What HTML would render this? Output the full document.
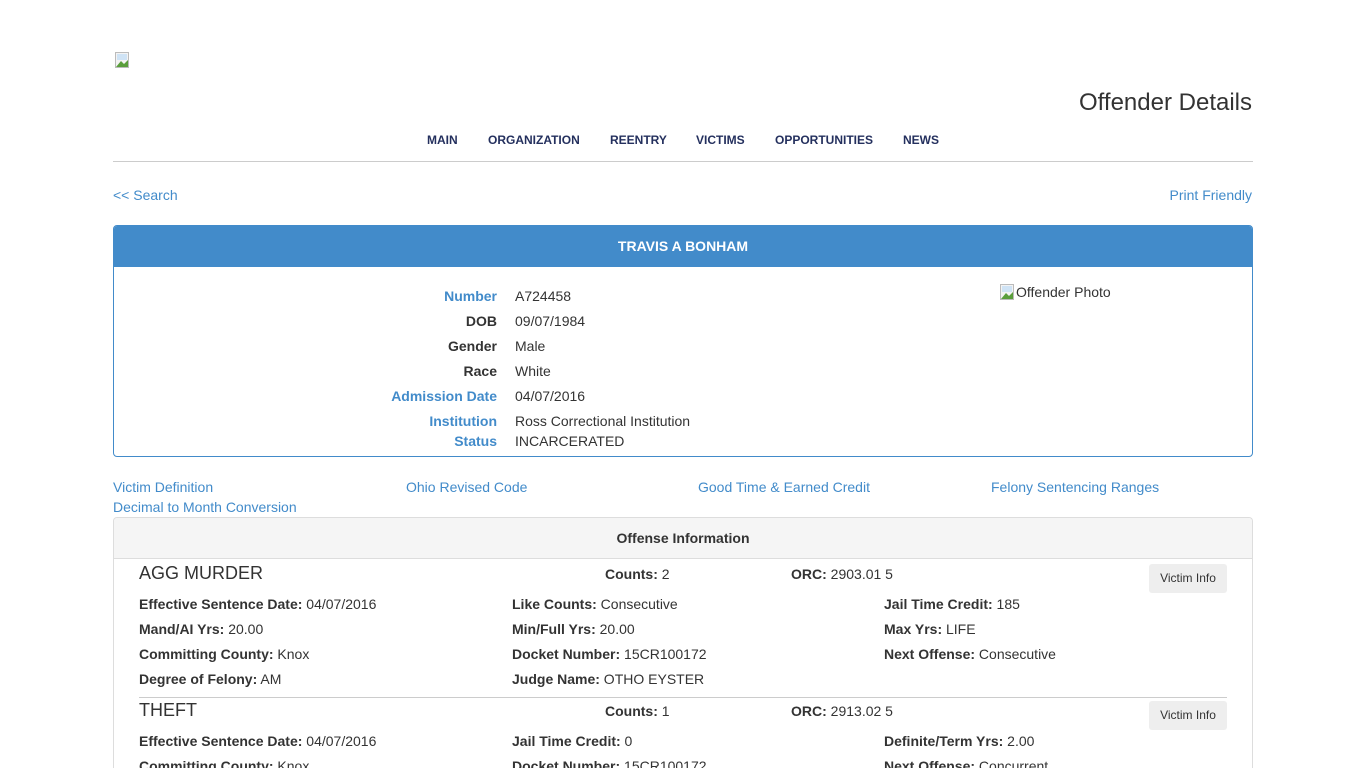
<!DOCTYPE html>
<html style="width:1366px;height:768px;overflow:hidden"><head><meta charset="utf-8"><style>
*{margin:0;padding:0;box-sizing:border-box}
body{width:1366px;height:768px;overflow:hidden;background:#fff;font-family:"Liberation Sans",Arial,sans-serif;font-size:14px;color:#333;position:relative}
.a{position:absolute;white-space:nowrap;line-height:20px}
.l{color:#428bca}
.nav{font-size:12px;font-weight:bold;color:#24305e}
b{font-weight:bold;color:#333}
.btn{position:absolute;width:78px;height:29px;background:#eeeeee;border-radius:3px;font-size:12px;line-height:29px;text-align:center;color:#333}
.hr{position:absolute;height:1px;background:#ccc}
</style></head><body>
<svg style="position:absolute;left:115px;top:52px" width="16" height="16"><rect x="0.5" y="0.5" width="13" height="15" fill="#f3f3f3" stroke="#bbb"/><path d="M1 15 L6 9 L9 12 L13 8 L13 15Z" fill="#5a9e3c"/><rect x="2" y="2" width="10" height="6" fill="#cfe3f5"/></svg>
<div class="a" style="right:114px;top:89px;font-size:24px;line-height:28px;color:#333">Offender Details</div>
<div class="a nav" style="left:427px;top:130px">MAIN</div>
<div class="a nav" style="left:488px;top:130px">ORGANIZATION</div>
<div class="a nav" style="left:610px;top:130px">REENTRY</div>
<div class="a nav" style="left:696px;top:130px">VICTIMS</div>
<div class="a nav" style="left:775px;top:130px">OPPORTUNITIES</div>
<div class="a nav" style="left:903px;top:130px">NEWS</div>
<div class="hr" style="left:113px;top:161px;width:1140px"></div>
<div class="a l" style="left:113px;top:185px">&lt;&lt; Search</div>
<div class="a l" style="right:114px;top:185px">Print Friendly</div>
<div style="position:absolute;left:113px;top:225px;width:1140px;height:232px;border:1px solid #428bca;border-radius:4px;overflow:hidden">
<div style="height:41px;background:#428bca;color:#fff;font-weight:bold;text-align:center;line-height:41px">TRAVIS A BONHAM</div>
</div>
<div class="a" style="right:869px;top:286px;font-weight:bold;color:#428bca">Number</div>
<div class="a" style="right:869px;top:311px;font-weight:bold">DOB</div>
<div class="a" style="right:869px;top:336px;font-weight:bold">Gender</div>
<div class="a" style="right:869px;top:361px;font-weight:bold">Race</div>
<div class="a" style="right:869px;top:386px;font-weight:bold;color:#428bca">Admission Date</div>
<div class="a" style="right:869px;top:411px;font-weight:bold;color:#428bca">Institution</div>
<div class="a" style="right:869px;top:431px;font-weight:bold;color:#428bca">Status</div>
<div class="a" style="left:515px;top:286px">A724458</div>
<div class="a" style="left:515px;top:311px">09/07/1984</div>
<div class="a" style="left:515px;top:336px">Male</div>
<div class="a" style="left:515px;top:361px">White</div>
<div class="a" style="left:515px;top:386px">04/07/2016</div>
<div class="a" style="left:515px;top:411px">Ross Correctional Institution</div>
<div class="a" style="left:515px;top:431px">INCARCERATED</div>
<svg style="position:absolute;left:1000px;top:284px" width="16" height="16"><rect x="0.5" y="0.5" width="13" height="15" fill="#f3f3f3" stroke="#bbb"/><path d="M1 15 L6 9 L9 12 L13 8 L13 15Z" fill="#5a9e3c"/><rect x="2" y="2" width="10" height="6" fill="#cfe3f5"/></svg>
<div class="a" style="left:1016px;top:282px">Offender Photo</div>
<div class="a l" style="left:113px;top:477px">Victim Definition</div>
<div class="a l" style="left:406px;top:477px">Ohio Revised Code</div>
<div class="a l" style="left:698px;top:477px">Good Time &amp; Earned Credit</div>
<div class="a l" style="left:991px;top:477px">Felony Sentencing Ranges</div>
<div class="a l" style="left:113px;top:497px">Decimal to Month Conversion</div>
<div style="position:absolute;left:113px;top:517px;width:1140px;height:251px;border:1px solid #ddd;border-bottom:none;border-radius:4px 4px 0 0;overflow:hidden">
<div style="height:41px;background:#f5f5f5;border-bottom:1px solid #ddd;text-align:center;font-weight:bold;line-height:40px">Offense Information</div>
</div>
<div class="a" style="left:139px;top:562px;font-size:18px;line-height:22px">AGG MURDER</div>
<div class="a" style="left:605px;top:564px"><b>Counts:</b> 2</div>
<div class="a" style="left:791px;top:564px"><b>ORC:</b> 2903.01 5</div>
<div class="btn" style="left:1149px;top:564px">Victim Info</div>
<div class="a" style="left:139px;top:594px"><b>Effective Sentence Date:</b> 04/07/2016</div>
<div class="a" style="left:512px;top:594px"><b>Like Counts:</b> Consecutive</div>
<div class="a" style="left:884px;top:594px"><b>Jail Time Credit:</b> 185</div>
<div class="a" style="left:139px;top:619px"><b>Mand/AI Yrs:</b> 20.00</div>
<div class="a" style="left:512px;top:619px"><b>Min/Full Yrs:</b> 20.00</div>
<div class="a" style="left:884px;top:619px"><b>Max Yrs:</b> LIFE</div>
<div class="a" style="left:139px;top:644px"><b>Committing County:</b> Knox</div>
<div class="a" style="left:512px;top:644px"><b>Docket Number:</b> 15CR100172</div>
<div class="a" style="left:884px;top:644px"><b>Next Offense:</b> Consecutive</div>
<div class="a" style="left:139px;top:669px"><b>Degree of Felony:</b> AM</div>
<div class="a" style="left:512px;top:669px"><b>Judge Name:</b> OTHO EYSTER</div>
<div class="hr" style="left:139px;top:697px;width:1088px;background:#ccc"></div>
<div class="a" style="left:139px;top:699px;font-size:18px;line-height:22px">THEFT</div>
<div class="a" style="left:605px;top:701px"><b>Counts:</b> 1</div>
<div class="a" style="left:791px;top:701px"><b>ORC:</b> 2913.02 5</div>
<div class="btn" style="left:1149px;top:701px">Victim Info</div>
<div class="a" style="left:139px;top:731px"><b>Effective Sentence Date:</b> 04/07/2016</div>
<div class="a" style="left:512px;top:731px"><b>Jail Time Credit:</b> 0</div>
<div class="a" style="left:884px;top:731px"><b>Definite/Term Yrs:</b> 2.00</div>
<div class="a" style="left:139px;top:756px"><b>Committing County:</b> Knox</div>
<div class="a" style="left:512px;top:756px"><b>Docket Number:</b> 15CR100172</div>
<div class="a" style="left:884px;top:756px"><b>Next Offense:</b> Concurrent</div>
</body></html>
